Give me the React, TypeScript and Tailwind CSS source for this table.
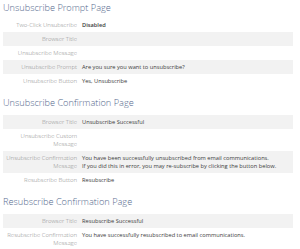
import React from 'react';

type Row = { label: string[]; value?: string[]; bold?: boolean };

const sections: { title: string; stripeOdd: boolean; rows: Row[] }[] = [
  {
    title: 'Unsubscribe Prompt Page',
    stripeOdd: true,
    rows: [
      { label: ['Two-Click Unsubscribe'], value: ['Disabled'], bold: true },
      { label: ['Browser Title'] },
      { label: ['Unsubscribe Message'] },
      { label: ['Unsubscribe Prompt'], value: ['Are you sure you want to unsubscribe?'] },
      { label: ['Unsubscribe Button'], value: ['Yes, Unsubscribe'] },
    ],
  },
  {
    title: 'Unsubscribe Confirmation Page',
    stripeOdd: false,
    rows: [
      { label: ['Browser Title'], value: ['Unsubscribe Successful'] },
      { label: ['Unsubscribe Custom', 'Message'] },
      {
        label: ['Unsubscribe Confirmation', 'Message'],
        value: [
          'You have been successfully unsubscribed from email communications.',
          'If you did this in error, you may re-subscribe by clicking the button below.',
        ],
      },
      { label: ['Resubscribe Button'], value: ['Resubscribe'] },
    ],
  },
  {
    title: 'Resubscribe Confirmation Page',
    stripeOdd: false,
    rows: [
      { label: ['Browser Title'], value: ['Resubscribe Successful'] },
      {
        label: ['Resubscribe Confirmation', 'Message'],
        value: ['You have successfully resubscribed to email communications.'],
      },
    ],
  },
];

export default function App() {
  return (
    <div
      className="w-[300px] h-[249px] overflow-hidden bg-white pl-[3px] pr-[7px]"
      style={{ fontFamily: '"Open Sans", "Liberation Sans", sans-serif' }}
    >
      {sections.map((s, si) => (
        <div key={s.title}>
          <h2
            className={`text-[9.2px] leading-[12px] font-light text-[#54698d] ${
              si === 0 ? 'pt-[2px] mb-[4px]' : 'mt-[9px] mb-[6px]'
            }`}
          >
            {s.title}
          </h2>
          {s.rows.map((r, ri) => {
            const gray = s.stripeOdd ? ri % 2 === 1 : ri % 2 === 0;
            return (
              <div
                key={ri}
                className={`flex py-[3px] leading-[8px] whitespace-nowrap ${
                  gray ? 'bg-[#f2f2f2]' : ''
                }`}
              >
                <div className="w-[74px] shrink-0 text-right text-[6px] text-[#8c8c8c] font-light">
                  {r.label.map((l) => (
                    <div key={l}>{l}</div>
                  ))}
                </div>
                <div
                  className={`pl-[5px] text-[5.7px] text-[#3c3c3c] ${
                    r.bold ? 'font-semibold' : 'font-normal'
                  }`}
                >
                  {r.value?.map((v) => (
                    <div key={v}>{v}</div>
                  ))}
                </div>
              </div>
            );
          })}
        </div>
      ))}
    </div>
  );
}
